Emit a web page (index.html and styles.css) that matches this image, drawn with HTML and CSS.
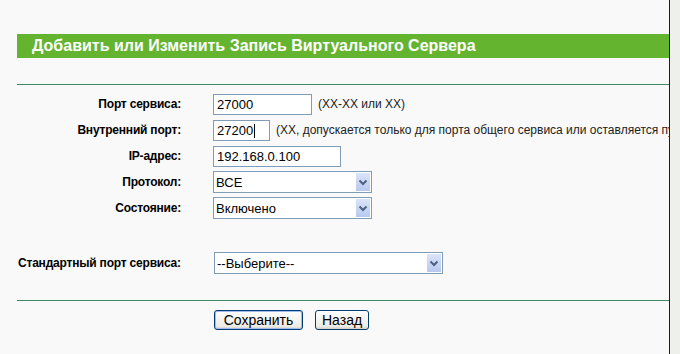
FILE: index.html
```html
<!DOCTYPE html>
<html lang="ru">
<head>
<meta charset="utf-8">
<title>Виртуальный сервер</title>
<link rel="stylesheet" href="styles.css">
</head>
<body>
<div class="page">
  <main class="main">
    <h1 class="title">Добавить или Изменить Запись Виртуального Сервера</h1>
    <hr class="sep">
    <div class="form">
      <label class="lbl">Порт сервиса:</label>
      <div class="val"><input class="txt w98" type="text" value="27000"><span class="hint">(XX-XX или XX)</span></div>

      <label class="lbl">Внутренний порт:</label>
      <div class="val"><span class="field"><input class="txt w56" type="text" value="27200"><span class="caret"></span></span><span class="hint">(XX, допускается только для порта общего сервиса или оставляется пустым)</span></div>

      <label class="lbl">IP-адрес:</label>
      <div class="val"><input class="txt w127" type="text" value="192.168.0.100"></div>

      <label class="lbl">Протокол:</label>
      <div class="val"><span class="sel w159"><select><option>ВСЕ</option><option>TCP</option><option>UDP</option></select><span class="arrow"><svg width="14" height="18" viewBox="0 0 14 18"><path d="M3.5 7.5 L7 11 L10.5 7.5" fill="none" stroke="#4d6185" stroke-width="2"/></svg></span></span></div>

      <label class="lbl">Состояние:</label>
      <div class="val"><span class="sel w159"><select><option>Включено</option><option>Выключено</option></select><span class="arrow"><svg width="14" height="18" viewBox="0 0 14 18"><path d="M3.5 7.5 L7 11 L10.5 7.5" fill="none" stroke="#4d6185" stroke-width="2"/></svg></span></span></div>
    </div>

    <div class="std">
      <label class="lbl std-lbl">Стандартный порт сервиса:</label>
      <span class="sel w228"><select><option>--Выберите--</option></select><span class="arrow"><svg width="14" height="18" viewBox="0 0 14 18"><path d="M3.5 7.5 L7 11 L10.5 7.5" fill="none" stroke="#4d6185" stroke-width="2"/></svg></span></span>
    </div>

    <hr class="sep">
    <div class="buttons">
      <button class="btn btn-default" type="button">Сохранить</button>
      <button class="btn" type="button">Назад</button>
    </div>
  </main>
  <div class="edge"></div>
</div>
</body>
</html>
```
FILE: styles.css
```css
html, body {
  margin: 0;
  padding: 0;
  height: 100%;
}
body {
  background: #f9f9f9;
  font-family: "Liberation Sans", Arial, sans-serif;
  color: #000;
}
.page {
  display: flex;
  height: 354px;
  overflow: hidden;
}
.main {
  width: 652px;
  padding: 34px 0 0 17px;
  border-right: 1px solid #1e1e1e;
  overflow: hidden;
  background: #f9f9f9;
  flex: none;
}
.edge {
  flex: 1;
  background: #eef0ec;
}
.title {
  margin: 0;
  height: 24px;
  background: #65b430;
  color: #ffffff;
  font-size: 16px;
  font-weight: bold;
  line-height: 24px;
  padding-left: 15px;
  white-space: nowrap;
}
.sep {
  margin: 26px 0 0 0;
  border: 0;
  height: 1px;
  background: #3e8a68;
}
.form {
  display: grid;
  grid-template-columns: 164px 1fr;
  column-gap: 32px;
  grid-auto-rows: 26px;
  margin-top: 6px;
}
.lbl {
  font-size: 12px;
  font-weight: bold;
  text-align: right;
  align-self: center;
  white-space: nowrap;
  letter-spacing: -0.2px;
}
.val {
  display: flex;
  align-items: center;
  white-space: nowrap;
}
.field {
  position: relative;
  display: inline-flex;
}
.caret {
  position: absolute;
  left: 41px;
  top: 4px;
  width: 1px;
  height: 14px;
  background: #000;
}
.txt {
  box-sizing: border-box;
  height: 21px;
  border: 1px solid #7f9db9;
  background: #fff;
  font-family: "Liberation Sans", Arial, sans-serif;
  font-size: 13px;
  padding: 1px 3px 0;
  margin: 0;
  color: #000;
}
.w98 { width: 99px; }
.w56 { width: 57px; }
.w127 { width: 128px; }
.hint {
  font-size: 12px;
  color: #222;
  margin-left: 6px;
}
.sel {
  position: relative;
  display: inline-block;
  height: 22px;
  box-sizing: border-box;
  border: 1px solid #7f9db9;
  background: #fff;
}
.sel select {
  appearance: none;
  -webkit-appearance: none;
  border: 0;
  outline: 0;
  background: transparent;
  width: 100%;
  height: 100%;
  font-family: "Liberation Sans", Arial, sans-serif;
  font-size: 13px;
  padding: 0 0 0 2px;
  margin: 0;
  color: #000;
}
.arrow {
  position: absolute;
  top: 1px;
  right: 1px;
  width: 14px;
  height: 18px;
  background: linear-gradient(#dbe5f9, #b7c8f0);
  border: 0;
  box-sizing: border-box;
  display: flex;
}
.w159 { width: 159px; }
.w228 { width: 229px; }
.std {
  display: flex;
  align-items: center;
  margin-top: 31px;
  height: 22px;
}
.std-lbl {
  width: 196px;
  text-align: left;
  padding-left: 1px;
  flex: none;
}
.std .sel { flex: none; }
.buttons {
  display: flex;
  gap: 12px;
  padding-left: 197px;
  margin-top: 9px;
}
.btn {
  height: 20px;
  box-sizing: border-box;
  border: 1px solid #003c74;
  border-radius: 3px;
  background: linear-gradient(#ffffff, #ecebe6 85%, #d6d0c5);
  font-family: "Liberation Sans", Arial, sans-serif;
  font-size: 14px;
  padding: 0 6px;
  color: #000;
  line-height: 17px;
}
.btn-default {
  width: 89px;
  box-shadow: inset 0 0 0 1px #9fbbef;
}
```
